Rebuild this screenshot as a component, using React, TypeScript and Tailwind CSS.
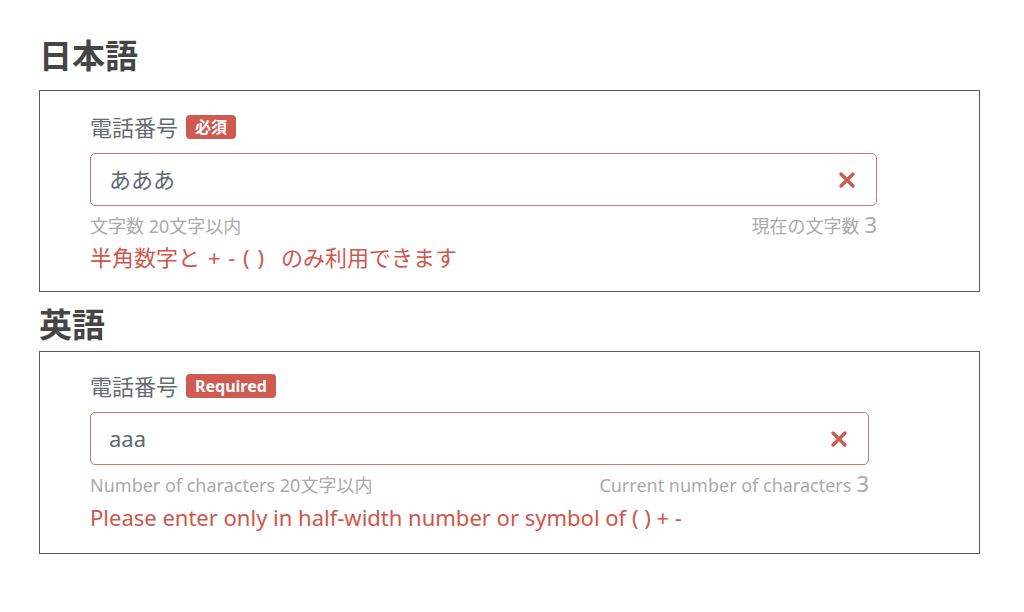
import React from "react";

const font = { fontFamily: '"Noto Sans", "Noto Sans CJK JP", sans-serif' };

function XIcon() {
  return (
    <svg width="18" height="18" viewBox="0 0 18 18" className="shrink-0">
      <path d="M3 3 L15 15 M15 3 L3 15" stroke="#cf5a52" strokeWidth="3.4" strokeLinecap="round" />
    </svg>
  );
}

function Field({
  badge,
  value,
  leftHelp,
  rightHelp,
  error,
  inputW,
  pt,
  pb,
  errMt,
}: {
  badge: string;
  value: string;
  leftHelp: string;
  rightHelp: string;
  error: React.ReactNode;
  inputW: string;
  pt: string;
  pb: string;
  errMt: string;
}) {
  return (
    <div className={`w-[941px] border border-[#5a5a5a] pl-[50px] ${pt} ${pb}`}>
      <div className={inputW}>
        <div className="flex h-[24px] items-center gap-[8px]">
          <span className="text-[22px] leading-none text-[#666b70]">電話番号</span>
          <span className="flex h-[24px] items-center rounded-[4px] bg-[#cf5a52] px-[9px] text-[16px] font-bold leading-none text-white">
            {badge}
          </span>
        </div>
        <div className="mt-[14px] flex h-[53px] items-center justify-between rounded-[5px] border-[1.5px] border-[#d8756d] pl-[18px] pr-[20px]">
          <span className="text-[22px] text-[#5e6a73]">{value}</span>
          <XIcon />
        </div>
        <div className="mt-[9px] flex h-[22px] items-center justify-between text-[18px] text-[#aaaaaa]">
          <span>{leftHelp}</span>
          <span className="flex items-baseline gap-[5px]">
            <span>{rightHelp}</span>
            <span className="text-[22px] leading-none">3</span>
          </span>
        </div>
        <div className={`${errMt} text-[22px] leading-[28px] text-[#d0564c]`}>{error}</div>
      </div>
    </div>
  );
}

export default function App() {
  return (
    <div className="min-h-[612px] w-[1024px] bg-white pl-[39px] pt-[37px]" style={font}>
      <h1 className="text-[33px] font-bold leading-[38px] text-[#454545]">日本語</h1>
      <div className="mt-[15px]">
        <Field
          badge="必須"
          value="あああ"
          leftHelp="文字数 20文字以内"
          rightHelp="現在の文字数"
          error={
            <>
              半角数字と<span className="mx-[8px] [word-spacing:2px]">+ - ( )</span>
              <span className="ml-[9px]">のみ利用できます</span>
            </>
          }
          inputW="w-[787px]"
          pt="pt-[24px]"
          pb="pb-[20px]"
          errMt="mt-[6px]"
        />
      </div>
      <h1 className="mt-[14px] text-[33px] font-bold leading-[38px] text-[#454545]">英語</h1>
      <div className="mt-[7px]">
        <Field
          badge="Required"
          value="aaa"
          leftHelp="Number of characters 20文字以内"
          rightHelp="Current number of characters"
          error="Please enter only in half-width number or symbol of ( ) + -"
          inputW="w-[779px]"
          pt="pt-[22px]"
          pb="pb-[22px]"
          errMt="mt-[7px]"
        />
      </div>
    </div>
  );
}
